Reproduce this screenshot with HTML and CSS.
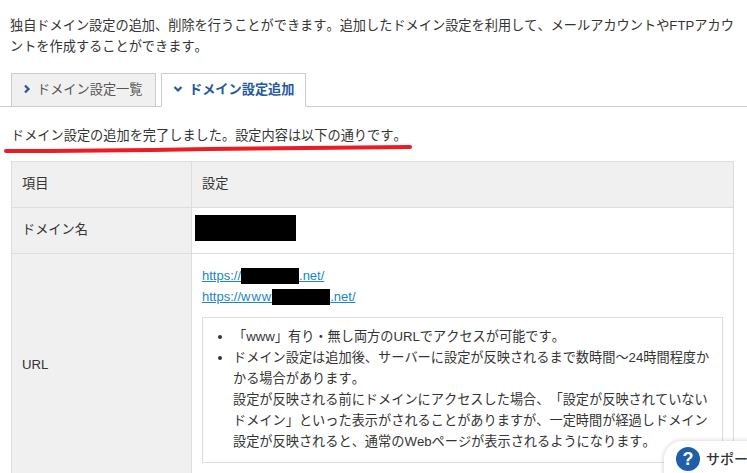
FILE: index.html
```html
<!DOCTYPE html>
<html lang="ja">
<head>
<meta charset="utf-8">
<title>ドメイン設定追加</title>
<link rel="stylesheet" href="styles.css">
</head>
<body>
<div class="page">
  <p class="intro">独自ドメイン設定の追加、削除を行うことができます。追加したドメイン設定を利用して、メールアカウントやFTPアカウントを作成することができます。</p>
  <ul class="tabs">
    <li class="tab"><svg class="chev" viewBox="0 0 8 10"><path d="M2 1.5 5.5 5 2 8.5" fill="none" stroke="#23599c" stroke-width="2.2"/></svg>ドメイン設定一覧</li>
    <li class="tab tab-active"><svg class="chev" viewBox="0 0 10 8"><path d="M1.5 2 5 5.5 8.5 2" fill="none" stroke="#23599c" stroke-width="2.2"/></svg>ドメイン設定追加</li>
  </ul>
  <div class="message">
    <p class="message-text">ドメイン設定の追加を完了しました。設定内容は以下の通りです。</p>
    <svg class="scribble" viewBox="0 0 420 12"><path d="M6 10C90 10 150 9 210 8S340 7 410 6" fill="none" stroke="#ed1c24" stroke-width="4" stroke-linecap="round"/></svg>
  </div>
  <table class="info">
    <tr><th class="head">項目</th><td class="head">設定</td></tr>
    <tr><th>ドメイン名</th><td><span class="mask mask-name"></span></td></tr>
    <tr>
      <th>URL</th>
      <td class="url-cell">
        <p class="url"><a href="#">https://<span class="mask mask-url"></span>.net/</a></p>
        <p class="url"><a href="#">https://<span class="www">www</span><span class="mask mask-url"></span>.net/</a></p>
        <ul class="notes">
          <li>「www」有り・無し両方のURLでアクセスが可能です。</li>
          <li>ドメイン設定は追加後、サーバーに設定が反映されるまで数時間～24時間程度かかる場合があります。<br>設定が反映される前にドメインにアクセスした場合、「設定が反映されていないドメイン」といった表示がされることがありますが、一定時間が経過しドメイン設定が反映されると、通常のWebページが表示されるようになります。</li>
        </ul>
      </td>
    </tr>
  </table>
</div>
<div class="support">
  <svg class="support-icon" viewBox="0 0 24 24"><circle cx="12" cy="12" r="12" fill="#1f5ea8"/><text x="12" y="18" text-anchor="middle" class="qmark">?</text></svg>
  <span>サポート</span>
</div>
</body>
</html>
```
FILE: styles.css
```css
* { box-sizing: border-box; }
html, body { margin: 0; height: 100%; overflow: hidden; background: #fff; }
body { font-family: "Liberation Sans", "Noto Sans CJK JP", sans-serif; font-size: 13.2px; color: #333; font-kerning: none; text-spacing-trim: space-all; }
.page { height: 473px; overflow: hidden; }
.intro { margin: 0; padding: 15px 10px 0 10px; line-height: 21px; width: 747px; }
.tabs { list-style: none; margin: 16px 0 0; padding: 0 0 0 11px; display: flex; gap: 5px; border-bottom: 1px solid #ccc; height: 34px; }
.tab { width: 145px; height: 34px; background: #f0f0f0; border: 1px solid #ccc; border-bottom: 1px solid #ccc; display: flex; align-items: center; padding-left: 11px; color: #555; padding-bottom: 3px; }
.tab-active { background: #fff; border-bottom-color: #fff; color: #23599c; font-weight: bold; }
.chev { width: 8px; height: 10px; margin-right: 6px; }
.tab-active .chev { width: 10px; height: 8px; margin-right: 6px; }
.message { position: relative; height: 54px; padding: 19px 0 0 11px; }
.message-text { margin: 0; line-height: 20px; }
.scribble { position: absolute; left: 0; top: 34px; width: 420px; height: 12px; }
.info { width: 723px; margin-left: 11px; border-collapse: collapse; table-layout: fixed; }
.info th, .info td { border: 1px solid #ddd; padding: 0 10px 4px; height: 46px; font-weight: normal; text-align: left; }
.info th { width: 180px; background: #f0f0f0; }
.info td.head { background: #f0f0f0; }
.mask { display: inline-block; background: #000; }
.mask-name { width: 101px; height: 26px; margin-left: -7px; margin-bottom: 2px; vertical-align: middle; }
.mask-url { width: 58px; height: 16px; vertical-align: -4px; }
.www { letter-spacing: 1px; }
.info .url-cell { padding-top: 11px; padding-bottom: 15px; }
.url { margin: 0; line-height: 21px; font-size: 13px; }
.url a { color: #1a85c9; text-decoration: underline; }
.notes { margin: 10px 0 0; padding: 8px 10px 10px 30px; border: 1px solid #ddd; line-height: 21px; width: 521px; }
.support { position: absolute; left: 664px; top: 441px; width: 120px; height: 50px; background: #fff; border-radius: 18px; box-shadow: 0 0 5px rgba(0,0,0,.2); display: flex; align-items: flex-start; padding: 6px 0 0 12px; gap: 6px; font-size: 14px; font-weight: 500; overflow: hidden; }
.support span { line-height: 24px; white-space: nowrap; }
.support-icon { width: 24px; height: 24px; flex: none; }
.qmark { fill: #fff; font: bold 18px "Liberation Sans", sans-serif; }
```
